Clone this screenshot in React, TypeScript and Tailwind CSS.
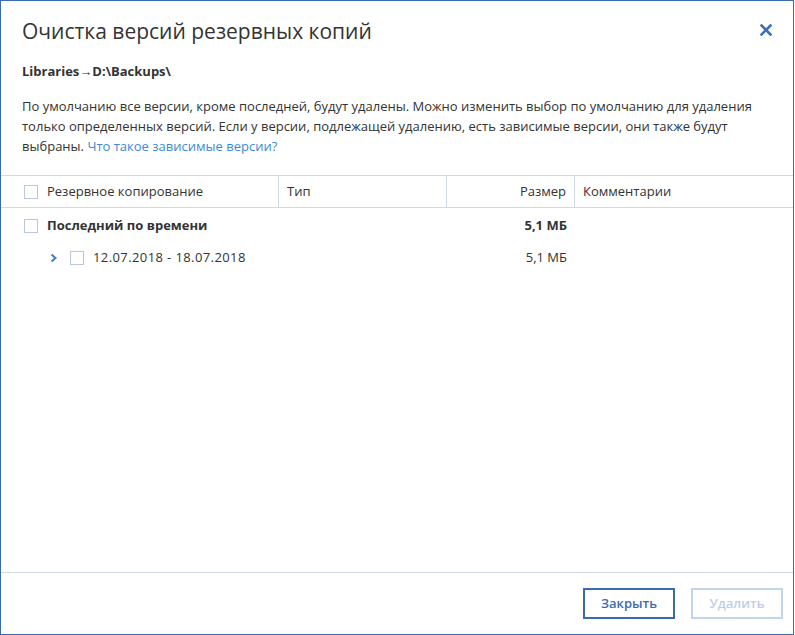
import * as React from 'react';

function Checkbox() {
    return <span className="block w-[14px] h-[14px] border border-[#b7c8dd] bg-white shrink-0" />;
}

export default function App() {
    return (
        <div className="w-[794px] h-[635px] border border-[#3a6bb0] bg-white flex flex-col text-[#333333] font-['Open_Sans',sans-serif]">
            {/* шапка */}
            <div className="px-[21px] pt-[13px]">
                <div className="flex items-center justify-between h-[32px]">
                    <h1 className="text-[21px] leading-[32px] font-normal text-[#333] pt-[1px]">Очистка версий резервных копий</h1>
                    <svg width="12" height="12" viewBox="0 0 12 12">
                        <path d="M1.5 1.5 L10.5 10.5 M10.5 1.5 L1.5 10.5" stroke="#3f6fb4" strokeWidth="2.6" strokeLinecap="square" />
                    </svg>
                </div>
                <div className="mt-[15px] text-[13px] leading-[20px] font-bold">Libraries→D:\Backups\</div>
                <p className="mt-[15px] text-[13px] leading-[20px]">
                    По умолчанию все версии, кроме последней, будут удалены. Можно изменить выбор по умолчанию для удаления
                    <br />
                    только определенных версий. Если у версии, подлежащей удалению, есть зависимые версии, они также будут
                    <br />
                    выбраны. <span className="text-[#3b8bd4]">Что такое зависимые версии?</span>
                </p>
            </div>

            {/* таблица */}
            <div className="mt-[19px] flex-1 border-t border-[#cddbe9] text-[13px]">
                <div className="grid grid-cols-[278px_168px_128px_1fr] h-[32px] border-b border-[#cddbe9]">
                    <div className="flex items-center gap-[9px] pl-[23px] border-r border-[#cddbe9]">
                        <Checkbox />
                        <span>Резервное копирование</span>
                    </div>
                    <div className="flex items-center pl-[8px] border-r border-[#cddbe9]">Тип</div>
                    <div className="flex items-center justify-end pr-[8px] border-r border-[#cddbe9]">Размер</div>
                    <div className="flex items-center pl-[8px]">Комментарии</div>
                </div>

                <div className="grid grid-cols-[278px_168px_128px_1fr] h-[34px] pt-[2px]">
                    <div className="flex items-center gap-[9px] pl-[23px]">
                        <Checkbox />
                        <span className="font-bold">Последний по времени</span>
                    </div>
                    <div />
                    <div className="flex items-center justify-end pr-[8px] font-bold">5,1 МБ</div>
                    <div />
                </div>

                <div className="grid grid-cols-[278px_168px_128px_1fr] h-[32px]">
                    <div className="flex items-center pl-[49px]">
                        <svg width="8" height="10" viewBox="0 0 8 10" className="shrink-0">
                            <path d="M1.5 1.5 L5.5 5 L1.5 8.5" fill="none" stroke="#4a7bbf" strokeWidth="2" />
                        </svg>
                        <span className="ml-[12px]"><Checkbox /></span>
                        <span className="ml-[9px] tracking-[0.4px]">12.07.2018 - 18.07.2018</span>
                    </div>
                    <div />
                    <div className="flex items-center justify-end pr-[8px]">5,1 МБ</div>
                    <div />
                </div>
            </div>

            {/* подвал */}
            <div className="h-[62px] border-t border-[#cddbe9] flex items-start justify-end gap-[16px] pt-[15px] pr-[10px]">
                <button className="w-[92px] h-[31px] border-2 border-[#3a6bb0] text-[13px] font-semibold text-[#3a6bb0] bg-white">Закрыть</button>
                <button className="w-[92px] h-[31px] border-2 border-[#c3d5ea] text-[13px] font-semibold text-[#bccfe6] bg-white">Удалить</button>
            </div>
        </div>
    );
}
